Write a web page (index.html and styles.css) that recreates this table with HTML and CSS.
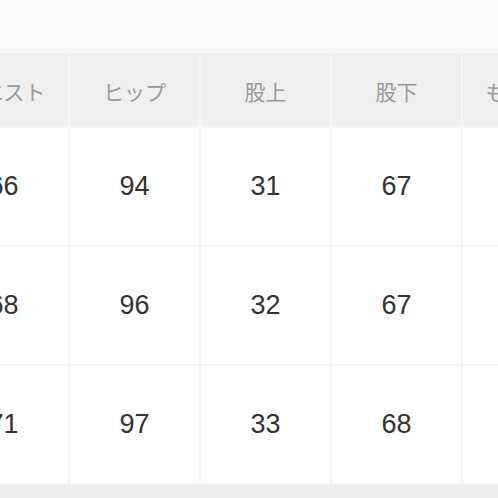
FILE: index.html
```html
<!DOCTYPE html>
<html lang="ja">
<head>
<meta charset="utf-8">
<link rel="stylesheet" href="styles.css">
</head>
<body>
<div class="page">
  <div class="table">
    <div class="cell head">ウエスト</div>
    <div class="cell head">ヒップ</div>
    <div class="cell head">股上</div>
    <div class="cell head">股下</div>
    <div class="cell head">もも周り</div>
    <div class="cell head">裾幅</div>

    <div class="cell">66</div>
    <div class="cell">94</div>
    <div class="cell">31</div>
    <div class="cell">67</div>
    <div class="cell">58</div>
    <div class="cell">20</div>

    <div class="cell">68</div>
    <div class="cell">96</div>
    <div class="cell">32</div>
    <div class="cell">67</div>
    <div class="cell">59</div>
    <div class="cell">20</div>

    <div class="cell">71</div>
    <div class="cell">97</div>
    <div class="cell">33</div>
    <div class="cell">68</div>
    <div class="cell">60</div>
    <div class="cell">21</div>
  </div>
  <div class="footer"></div>
</div>
</body>
</html>
```

FILE: styles.css
```css
html, body {
  margin: 0;
  padding: 0;
  background: #f9f9f9;
  width: 498px;
  height: 498px;
  overflow: hidden;
}

.page {
  padding-top: 53px;
  width: 498px;
  overflow: hidden;
}

.table {
  margin-left: -61px;
  display: grid;
  grid-template-columns: repeat(6, 129px);
  grid-template-rows: 73px 117px 117px 117px;
  gap: 2px;
  padding-bottom: 2px;
  background: #f5f5f5;
  width: max-content;
}

.cell {
  background: #ffffff;
  display: flex;
  align-items: center;
  justify-content: center;
  font-family: "Liberation Sans", Arial, sans-serif;
  font-size: 27px;
  color: #333333;
}

.cell.head {
  background: #efefef;
  font-family: "Noto Sans CJK JP", "Noto Sans", sans-serif;
  font-size: 21px;
  padding-top: 3px;
  color: #9a9a9a;
}

.footer {
  height: 20px;
  background: #eeeeee;
}
```
